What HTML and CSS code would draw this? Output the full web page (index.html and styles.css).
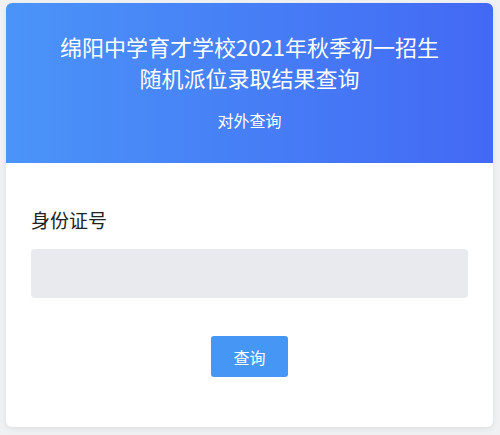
FILE: index.html
```html
<!DOCTYPE html>
<html lang="zh-CN">
<head>
    <meta charset="UTF-8">
    <meta name="viewport" content="width=device-width, initial-scale=1.0">
    <title>随机派位录取结果查询</title>
    <link rel="stylesheet" href="styles.css">
</head>
<body>
    <div class="card">
        <header class="card-header">
            <h1 class="title">绵阳中学育才学校2021年秋季初一招生<br>随机派位录取结果查询</h1>
            <p class="subtitle">对外查询</p>
        </header>

        <main class="card-body">
            <label class="field-label" for="id-input">身份证号</label>
            <input type="text" id="id-input" class="field-input">
            <div class="actions">
                <button class="query-button">查询</button>
            </div>
        </main>
    </div>
</body>
</html>
```

FILE: styles.css
```css
body {
    margin: 0;
    padding: 3px 7px 9px 6px;
    font-family: "Noto Sans CJK SC", "Noto Sans", sans-serif;
    background-color: #f0f1f3;
    color: #333;
}

.card {
    background-color: #fff;
    border-radius: 6px;
    overflow: hidden;
    box-shadow: 0 2px 6px rgba(0, 0, 0, 0.08);
}

.card-header {
    height: 160px;
    box-sizing: border-box;
    padding-top: 28px;
    background: linear-gradient(90deg, #4a94f8, #4369f4);
    color: #fff;
    text-align: center;
}

.title {
    margin: 0;
    font-size: 22px;
    font-weight: 400;
    line-height: 31px;
}

.subtitle {
    margin: 17px 0 0;
    font-size: 16px;
    line-height: 20px;
}

.card-body {
    padding: 44px 25px 50px;
}

.field-label {
    display: block;
    font-size: 19px;
    line-height: 26px;
    color: #222;
}

.field-input {
    display: block;
    width: 100%;
    height: 49px;
    margin-top: 16px;
    box-sizing: border-box;
    border: none;
    border-radius: 4px;
    background-color: #e9eaee;
    outline: none;
}

.actions {
    display: flex;
    justify-content: center;
    margin-top: 38px;
}

.query-button {
    width: 77px;
    height: 41px;
    border: none;
    border-radius: 3px;
    background-color: #4596f5;
    color: #fff;
    font-family: inherit;
    font-size: 16px;
    cursor: pointer;
}
```
